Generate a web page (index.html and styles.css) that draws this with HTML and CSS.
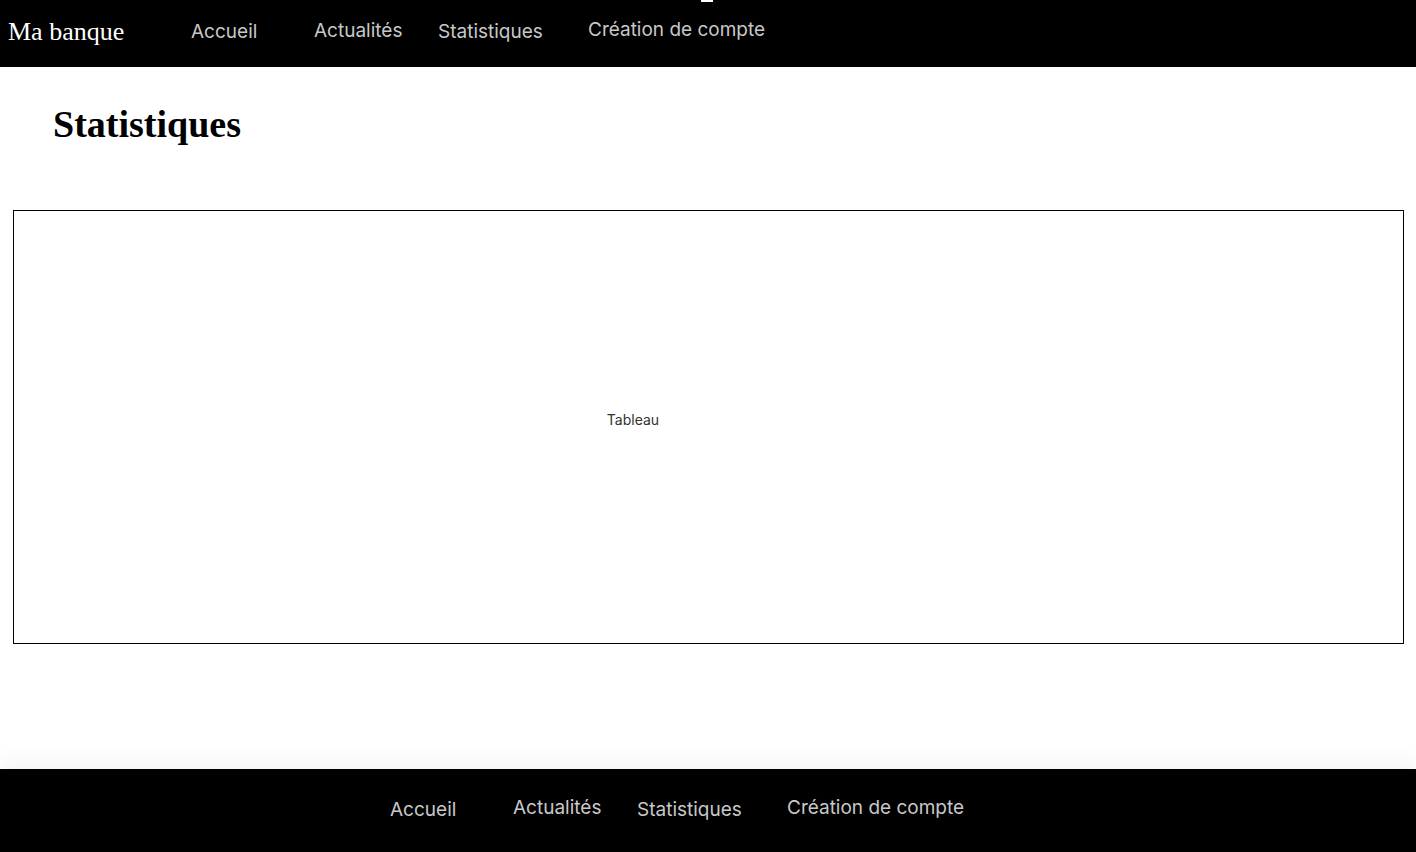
FILE: index.html
```html
<!DOCTYPE html>
<html lang="fr">
<head>
<meta charset="utf-8">
<title>Statistiques - Ma banque</title>
<link rel="stylesheet" href="styles.css">
</head>
<body>
<header class="topbar">
  <span class="brand">Ma banque</span>
  <nav class="nav">
    <a class="nav-link l1" href="#">Accueil</a>
    <a class="nav-link l2" href="#">Actualités</a>
    <a class="nav-link l3" href="#">Statistiques</a>
    <a class="nav-link l4" href="#">Création de compte</a>
  </nav>
  <span class="tick"></span>
</header>
<main class="content">
  <h1 class="title">Statistiques</h1>
  <section class="table-box">
    <span class="table-label">Tableau</span>
  </section>
</main>
<footer class="bottombar">
  <nav class="nav">
    <a class="nav-link l1" href="#">Accueil</a>
    <a class="nav-link l2" href="#">Actualités</a>
    <a class="nav-link l3" href="#">Statistiques</a>
    <a class="nav-link l4" href="#">Création de compte</a>
  </nav>
</footer>
</body>
</html>
```
FILE: styles.css
```css
* { box-sizing: border-box; }
html, body { margin: 0; padding: 0; }
body {
  background: #fff;
  font-family: Inter, "Liberation Sans", sans-serif;
  color: #000;
}
.topbar {
  position: relative;
  height: 67px;
  background: #000;
  display: flex;
  align-items: flex-start;
  padding-left: 8px;
}
.brand {
  font-family: "Liberation Serif", "DejaVu Serif", serif;
  font-size: 26px;
  color: #fff;
  line-height: 30px;
  margin-top: 17px;
  width: 183px;
}
.nav {
  display: flex;
  align-items: flex-start;
}
.nav-link {
  color: #c8c8c8;
  text-decoration: none;
  font-size: 19px;
  line-height: 22px;
}
.l1 { width: 123px; margin-top: 21px; }
.l2 { width: 124px; margin-top: 20px; }
.l3 { width: 150px; margin-top: 21px; }
.l4 { margin-top: 19px; }
.tick {
  position: absolute;
  left: 701px;
  top: 0;
  width: 12px;
  height: 2px;
  background: #fff;
}
.content {
  min-height: 702px;
  padding: 0 12px 0 13px;
  display: flex;
  flex-direction: column;
}
.title {
  font-family: "Liberation Serif", "DejaVu Serif", serif;
  font-weight: 700;
  font-size: 38px;
  line-height: 44px;
  margin: 35px 0 0 40px;
}
.table-box {
  margin-top: 64px;
  height: 434px;
  border: 1px solid #000;
  display: flex;
  align-items: center;
  justify-content: center;
  padding-right: 151px;
  padding-bottom: 15px;
}
.table-label {
  font-size: 14px;
  color: #333;
}
.bottombar {
  height: 83px;
  background: #000;
  display: flex;
  padding-left: 390px;
  box-shadow: 0 -6px 22px rgba(0,0,0,0.06);
}
.bottombar .l1 { margin-top: 30px; }
.bottombar .l2 { margin-top: 28px; }
.bottombar .l3 { margin-top: 30px; }
.bottombar .l4 { margin-top: 28px; }
```
